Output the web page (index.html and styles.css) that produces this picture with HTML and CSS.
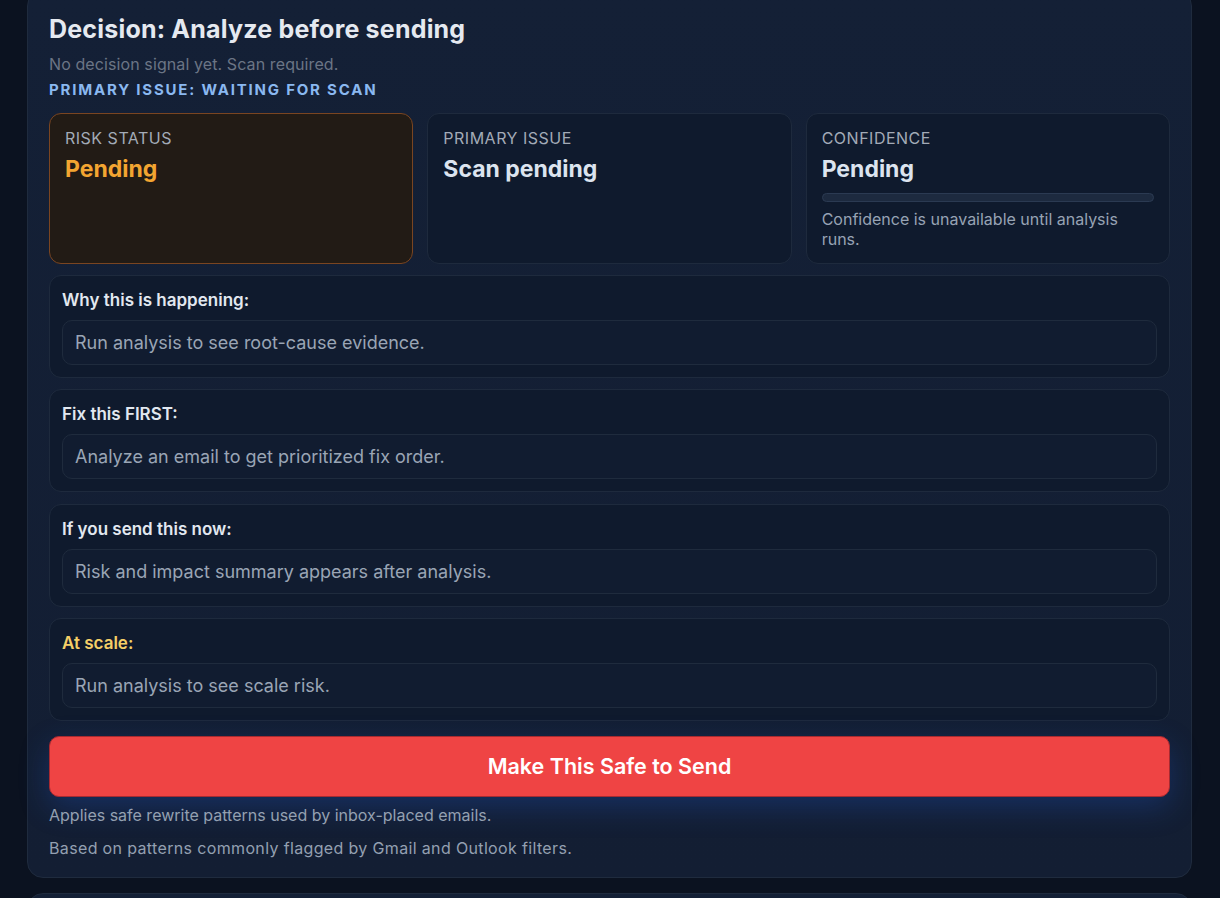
FILE: index.html
```html
<!DOCTYPE html>
<html>
<head lang="en">
    <meta charset="UTF-8">
    <title>Decision</title>
    <link rel="stylesheet" href="styles.css">
</head>
<body>
<div class="page">
    <div class="panel">
        <h2 class="decision_title">Decision: Analyze before sending</h2>
        <p class="decision_sub">No decision signal yet. Scan required.</p>
        <p class="decision_issue">Primary issue: Waiting for scan</p>

        <div class="stat_row">
            <div class="stat stat_risk">
                <div class="stat_label">Risk status</div>
                <div class="stat_value">Pending</div>
            </div>
            <div class="stat">
                <div class="stat_label">Primary issue</div>
                <div class="stat_value">Scan pending</div>
            </div>
            <div class="stat">
                <div class="stat_label">Confidence</div>
                <div class="stat_value">Pending</div>
                <div class="conf_bar"><div class="conf_fill"></div></div>
                <div class="stat_note">Confidence is unavailable until analysis runs.</div>
            </div>
        </div>

        <div class="block">
            <div class="block_title">Why this is happening:</div>
            <div class="block_body">Run analysis to see root-cause evidence.</div>
        </div>
        <div class="block">
            <div class="block_title">Fix this FIRST:</div>
            <div class="block_body">Analyze an email to get prioritized fix order.</div>
        </div>
        <div class="block">
            <div class="block_title">If you send this now:</div>
            <div class="block_body">Risk and impact summary appears after analysis.</div>
        </div>
        <div class="block">
            <div class="block_title block_warn">At scale:</div>
            <div class="block_body">Run analysis to see scale risk.</div>
        </div>

        <button type="button" class="btn_safe">Make This Safe to Send</button>
        <p class="foot_note">Applies safe rewrite patterns used by inbox-placed emails.</p>
        <p class="foot_note foot_wide">Based on patterns commonly flagged by Gmail and Outlook filters.</p>
    </div>
    <div class="panel panel_next"></div>
</div>
</body>
</html>
```

FILE: styles.css
```css
* {
    margin: 0;
    padding: 0;
    box-sizing: border-box;
}
html, body {
    height: 100%;
    overflow: hidden;
}
body {
    background-color: #0b1220;
    font-family: Inter, "Noto Sans", sans-serif;
    color: #e2e8f0;
}
.page {
    padding: 0 28px 0 27px;
}
.panel {
    margin-top: -10px;
    padding: 22px 21px 19px 21px;
    background: linear-gradient(180deg, #142036 0%, #131e33 100%);
    border: 1px solid #1f2b3e;
    border-radius: 16px;
}
.panel_next {
    margin-top: 15px;
    height: 120px;
}

.decision_title {
    font-size: 25px;
    line-height: 32px;
    font-weight: 700;
    letter-spacing: 0.2px;
    color: #e5e9f0;
}
.decision_sub {
    margin-top: 8px;
    font-size: 16px;
    line-height: 22px;
    letter-spacing: 0.1px;
    color: #6b7585;
}
.decision_issue {
    margin-top: 5px;
    font-size: 15px;
    line-height: 20px;
    font-weight: 700;
    letter-spacing: 1.8px;
    text-transform: uppercase;
    color: #8ab8f0;
}

.stat_row {
    margin-top: 13px;
    display: grid;
    grid-template-columns: 1fr 1fr 1fr;
    gap: 14px;
}
.stat {
    min-height: 151px;
    padding: 14px 15px;
    background-color: #0f1a2d;
    border: 1px solid #1e2a3d;
    border-radius: 12px;
}
.stat_risk {
    background-color: #221b15;
    border-color: #7a4521;
}
.stat_label {
    font-size: 16px;
    line-height: 20px;
    letter-spacing: 0.5px;
    text-transform: uppercase;
    color: #a3abb7;
}
.stat_value {
    margin-top: 7px;
    font-size: 23px;
    line-height: 28px;
    font-weight: 700;
    color: #dce4ef;
}
.stat_risk .stat_value {
    color: #f3a531;
}
.conf_bar {
    margin-top: 10px;
    height: 9px;
    background-color: #1d2a3f;
    border: 1px solid #2b3a52;
    border-radius: 5px;
    overflow: hidden;
}
.conf_fill {
    width: 0;
    height: 100%;
}
.stat_note {
    margin-top: 7px;
    font-size: 16px;
    line-height: 20px;
    color: #97a3b4;
}

.block {
    margin-top: 11.3px;
    padding: 12px;
    background-color: #0f1a2d;
    border: 1px solid #1e2a3d;
    border-radius: 12px;
}
.stat_row + .block {
    margin-top: 11px;
}
.block_title {
    font-size: 17px;
    line-height: 24px;
    font-weight: 600;
    color: #e2e8f0;
}
.block_warn {
    color: #f5cf67;
}
.block_body {
    margin-top: 8px;
    padding: 11px 12px;
    font-size: 18px;
    line-height: 21px;
    color: #9aa5b5;
    background-color: #111c30;
    border: 1px solid #1f2b3d;
    border-radius: 10px;
}

.btn_safe {
    display: block;
    width: 100%;
    height: 61px;
    margin-top: 15px;
    font-family: Inter, "Noto Sans", sans-serif;
    font-size: 21.5px;
    font-weight: 600;
    color: #ffffff;
    background-color: #ef4444;
    border: 1px solid #a82a30;
    border-radius: 10px;
    box-shadow: 0 10px 30px rgba(37, 99, 235, 0.25);
    cursor: pointer;
}
.foot_note {
    margin-top: 8px;
    font-size: 16px;
    line-height: 20px;
    color: #94a0b1;
}
.foot_note + .foot_note {
    margin-top: 13px;
}
.foot_wide {
    letter-spacing: 0.35px;
}
```
